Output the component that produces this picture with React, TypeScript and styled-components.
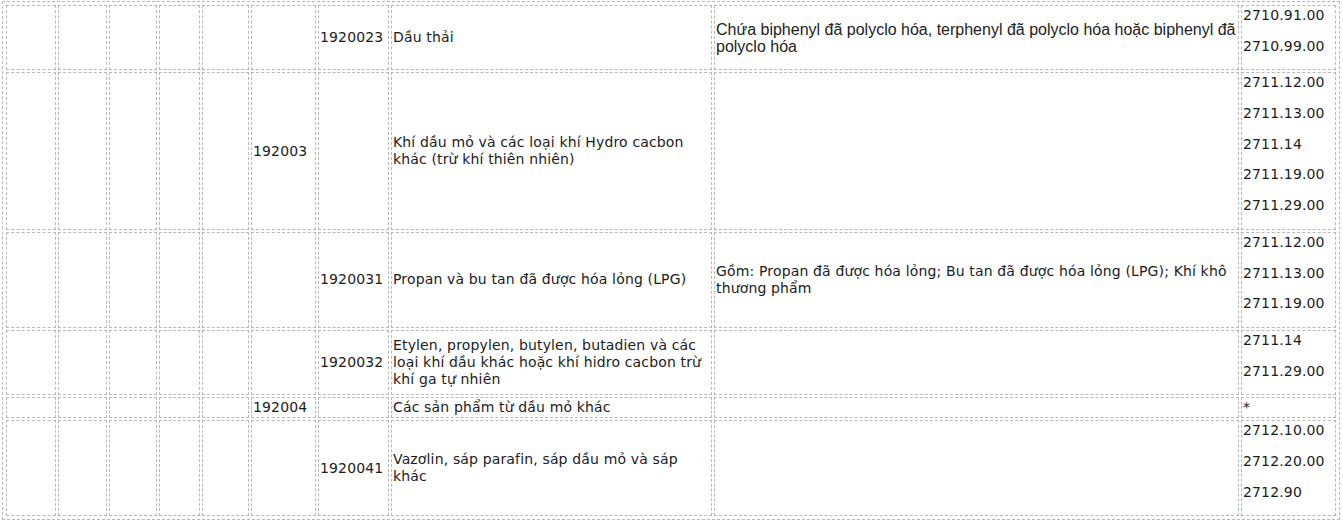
import React from "react";
import styled, { createGlobalStyle } from "styled-components";

const Global = createGlobalStyle`
  html, body { margin: 0; padding: 0; background: #ffffff; }
  body { font-family: "DejaVu Sans", Verdana, sans-serif; }
`;

const COLS = [50, 49, 48, 41, 47, 65, 71, 321, 525, 95];

const Table = styled.table`
  margin: 1px 0 0 2px;
  border: 1px dashed #b8b8b8;
  border-collapse: separate;
  border-spacing: 2px;
  padding: 1px;
  font-family: "DejaVu Sans", Verdana, sans-serif;
  font-size: 14px;
  line-height: 17px;
  letter-spacing: 0.15px;
  color: #1c1c1c;
`;

const Cell = styled.td<{ $w: number; $alt?: boolean }>`
  box-sizing: border-box;
  width: ${(p) => p.$w}px;
  border: 1px dashed #b8b8b8;
  padding: 1px;
  vertical-align: middle;
  text-align: left;
  ${(p) =>
    p.$alt
      ? `font-family: "Liberation Sans", Arial, sans-serif; font-size: 16px; line-height: 17px; letter-spacing: 0; color: #222;`
      : ""}
`;

const Code = styled.p`
  margin: 0 0 13.7px;
  white-space: nowrap;
`;

type RowData = {
  group?: string;
  sub?: string;
  desc: string;
  note?: string;
  noteAlt?: boolean;
  hs: string[] | string;
};

const rows: RowData[] = [
  {
    sub: "1920023",
    desc: "Dầu thải",
    note: "Chứa biphenyl đã polyclo hóa, terphenyl đã polyclo hóa hoặc biphenyl đã polyclo hóa",
    noteAlt: true,
    hs: ["2710.91.00", "2710.99.00"],
  },
  {
    group: "192003",
    desc: "Khí dầu mỏ và các loại khí Hydro cacbon khác (trừ khí thiên nhiên)",
    hs: ["2711.12.00", "2711.13.00", "2711.14", "2711.19.00", "2711.29.00"],
  },
  {
    sub: "1920031",
    desc: "Propan và bu tan đã được hóa lỏng (LPG)",
    note: "Gồm: Propan đã được hóa lỏng; Bu tan đã được hóa lỏng (LPG); Khí khô thương phẩm",
    hs: ["2711.12.00", "2711.13.00", "2711.19.00"],
  },
  {
    sub: "1920032",
    desc: "Etylen, propylen, butylen, butadien và các loại khí dầu khác hoặc khí hidro cacbon trừ khí ga tự nhiên",
    hs: ["2711.14", "2711.29.00"],
  },
  {
    group: "192004",
    desc: "Các sản phẩm từ dầu mỏ khác",
    hs: "*",
  },
  {
    sub: "1920041",
    desc: "Vazơlin, sáp parafin, sáp dầu mỏ và sáp khác",
    hs: ["2712.10.00", "2712.20.00", "2712.90"],
  },
];

function Row({ r }: { r: RowData }) {
  return (
    <tr>
      <Cell $w={COLS[0]} />
      <Cell $w={COLS[1]} />
      <Cell $w={COLS[2]} />
      <Cell $w={COLS[3]} />
      <Cell $w={COLS[4]} />
      <Cell $w={COLS[5]}>{r.group ?? ""}</Cell>
      <Cell $w={COLS[6]}>{r.sub ?? ""}</Cell>
      <Cell $w={COLS[7]}>{r.desc}</Cell>
      <Cell $w={COLS[8]} $alt={r.noteAlt}>
        {r.note ?? ""}
      </Cell>
      <Cell $w={COLS[9]}>
        {Array.isArray(r.hs) ? r.hs.map((c, i) => <Code key={i}>{c}</Code>) : r.hs}
      </Cell>
    </tr>
  );
}

export default function App() {
  return (
    <>
      <Global />
      <Table>
        <tbody>
          {rows.map((r, i) => (
            <Row key={i} r={r} />
          ))}
        </tbody>
      </Table>
    </>
  );
}
